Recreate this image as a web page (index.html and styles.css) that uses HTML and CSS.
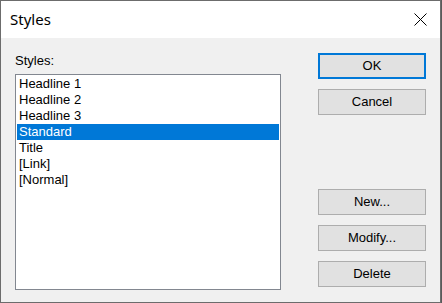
FILE: index.html
```html
<!DOCTYPE html>
<html>
<head>
<meta charset="utf-8">
<link rel="stylesheet" href="styles.css">
</head>
<body>
<div class="window">
  <div class="titlebar">
    <span class="title">Styles</span>
    <svg class="close" width="13" height="13" viewBox="0 0 13 13">
      <path d="M0.5 0.5 L12.5 12.5 M12.5 0.5 L0.5 12.5" stroke="#000" stroke-width="1" fill="none"/>
    </svg>
  </div>
  <div class="client">
    <div class="left">
      <div class="label">Styles:</div>
      <div class="listbox">
        <div class="item">Headline 1</div>
        <div class="item">Headline 2</div>
        <div class="item">Headline 3</div>
        <div class="item selected">Standard</div>
        <div class="item">Title</div>
        <div class="item">[Link]</div>
        <div class="item">[Normal]</div>
      </div>
    </div>
    <div class="right">
      <div class="group">
        <div class="btn default">OK</div>
        <div class="btn">Cancel</div>
      </div>
      <div class="group bottom">
        <div class="btn">New...</div>
        <div class="btn">Modify...</div>
        <div class="btn">Delete</div>
      </div>
    </div>
  </div>
</div>
</body>
</html>
```
FILE: styles.css
```css
html, body {
  margin: 0;
  padding: 0;
  background: #5a5a5a;
}
.window {
  width: 439px;
  height: 301px;
  border: 1px solid #6c6c6c;
  display: flex;
  flex-direction: column;
  background: #f0f0f0;
}
.titlebar {
  height: 37px;
  background: #fff;
  display: flex;
  align-items: center;
  justify-content: space-between;
  padding-left: 9px;
  padding-right: 13px;
}
.title {
  font-family: "Noto Sans", "Open Sans", sans-serif;
  font-size: 15px;
  color: #000;
  position: relative;
  top: -1px;
}
.close {
  display: block;
  margin-top: -1px;
}
.client {
  flex: 1;
  display: flex;
  padding: 15px 14px 0 14px;
  gap: 37px;
  font-family: "Liberation Sans", Arial, sans-serif;
  font-size: 13px;
  color: #000;
}
.left {
  width: 266px;
  display: flex;
  flex-direction: column;
}
.label {
  line-height: 16px;
  height: 16px;
  margin-bottom: 5px;
}
.listbox {
  height: 212px;
  border: 1px solid #828790;
  background: #fff;
  padding: 1px;
  box-sizing: content-box;
  width: 262px;
}
.item {
  height: 16px;
  line-height: 16px;
  padding-left: 2px;
  white-space: nowrap;
}
.item.selected {
  background: #0078d7;
  color: #fff;
}
.right {
  width: 108px;
  height: 234px;
  display: flex;
  flex-direction: column;
  justify-content: space-between;
}
.group {
  display: flex;
  flex-direction: column;
  gap: 10px;
}
.btn {
  height: 24px;
  border: 1px solid #adadad;
  background: #e1e1e1;
  display: flex;
  align-items: center;
  justify-content: center;
  line-height: 16px;
}
.btn.default {
  height: 22px;
  border: 2px solid #0078d7;
}
```
